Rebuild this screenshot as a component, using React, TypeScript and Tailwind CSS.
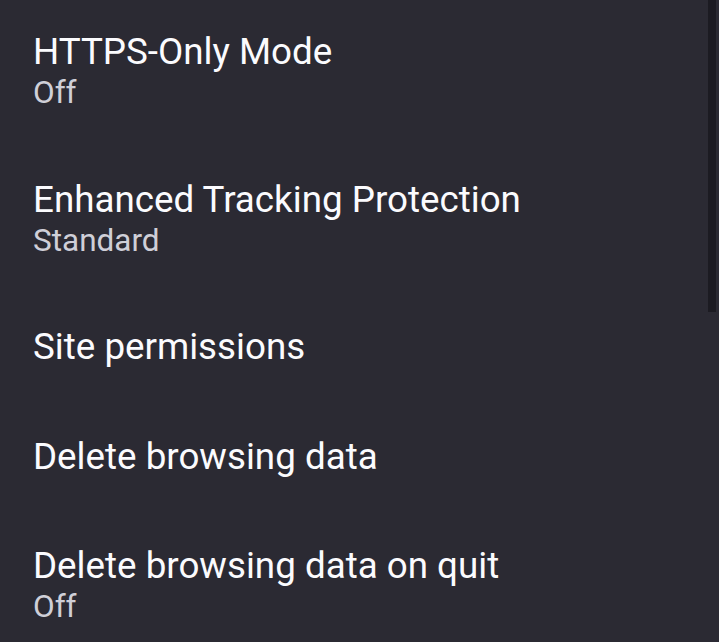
const items: { title: string; summary?: string }[] = [
  { title: "HTTPS-Only Mode", summary: "Off" },
  { title: "Enhanced Tracking Protection", summary: "Standard" },
  { title: "Site permissions" },
  { title: "Delete browsing data" },
  { title: "Delete browsing data on quit", summary: "Off" },
];

export default function App() {
  return (
    <div className="relative h-[642px] w-[719px] overflow-hidden bg-[#2b2a33] font-['Roboto',sans-serif]">
      <div className="flex flex-col">
        {items.map((item) => (
          <div key={item.title} className="flex flex-col px-[33px] pt-[30px] pb-[35.5px]">
            <span className="text-[36.75px] leading-[44px] text-[#fbfbfe]">{item.title}</span>
            {item.summary && (
              <span className="text-[31.5px] leading-[38px] text-[#cfcfd8]">{item.summary}</span>
            )}
          </div>
        ))}
      </div>
      {/* scrollbar */}
      <div className="absolute top-0 right-[3px] h-[312px] w-[8px] bg-[#1c1b22]" />
    </div>
  );
}
